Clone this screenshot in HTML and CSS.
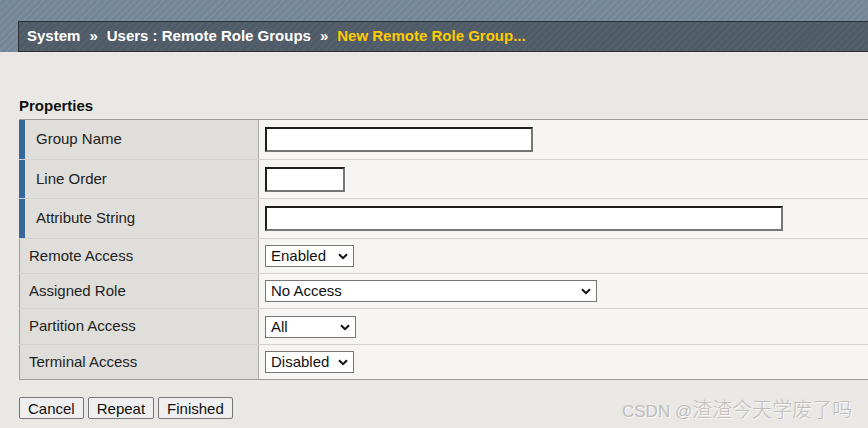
FILE: index.html
```html
<!DOCTYPE html>
<html lang="en">
<head>
<meta charset="utf-8">
<title>New Remote Role Group</title>
<link rel="stylesheet" href="styles.css">
</head>
<body>
<header class="topband">
  <div class="crumbs">
    <span class="crumb">System</span><span class="sep">»</span><span class="crumb">Users : Remote Role Groups</span><span class="sep">»</span><span class="crumb current">New Remote Role Group...</span>
  </div>
</header>
<main class="content">
  <div class="section-title">Properties</div>
  <div class="props">
    <div class="row req tall">
      <div class="label">Group Name</div>
      <div class="value"><input class="text w-name" type="text"></div>
    </div>
    <div class="row req tall2">
      <div class="label">Line Order</div>
      <div class="value"><input class="text w-order" type="text"></div>
    </div>
    <div class="row req tall">
      <div class="label">Attribute String</div>
      <div class="value"><input class="text w-attr" type="text"></div>
    </div>
    <div class="row">
      <div class="label">Remote Access</div>
      <div class="value"><span class="selwrap"><select class="sel w-89"><option>Enabled</option><option>Disabled</option></select><svg class="chev" width="10" height="7" viewBox="0 0 10 7"><path d="M1 1.2 L5 5.2 L9 1.2" fill="none" stroke="#111" stroke-width="2"/></svg></span></div>
    </div>
    <div class="row">
      <div class="label">Assigned Role</div>
      <div class="value"><span class="selwrap"><select class="sel w-role"><option>No Access</option></select><svg class="chev" width="10" height="7" viewBox="0 0 10 7"><path d="M1 1.2 L5 5.2 L9 1.2" fill="none" stroke="#111" stroke-width="2"/></svg></span></div>
    </div>
    <div class="row r36">
      <div class="label">Partition Access</div>
      <div class="value"><span class="selwrap"><select class="sel w-91"><option>All</option></select><svg class="chev" width="10" height="7" viewBox="0 0 10 7"><path d="M1 1.2 L5 5.2 L9 1.2" fill="none" stroke="#111" stroke-width="2"/></svg></span></div>
    </div>
    <div class="row last">
      <div class="label">Terminal Access</div>
      <div class="value"><span class="selwrap"><select class="sel w-89"><option>Disabled</option><option>Enabled</option></select><svg class="chev" width="10" height="7" viewBox="0 0 10 7"><path d="M1 1.2 L5 5.2 L9 1.2" fill="none" stroke="#111" stroke-width="2"/></svg></span></div>
    </div>
  </div>
  <div class="buttons">
    <button class="btn" type="button">Cancel</button>
    <button class="btn" type="button">Repeat</button>
    <button class="btn" type="button">Finished</button>
  </div>
</main>
<div class="watermark">CSDN @<span class="cjk">渣渣今天学废了吗</span></div>
</body>
</html>
```

FILE: styles.css
```css
html, body {
  margin: 0;
  padding: 0;
}
body {
  background: #e9e8e4;
  font-family: "Liberation Sans", Arial, sans-serif;
  font-size: 15px;
  color: #222;
  position: relative;
  min-height: 428px;
  overflow: hidden;
}
.topband {
  height: 52px;
  box-sizing: border-box;
  padding: 21px 0 0 18px;
  background-color: #74879a;
  background-image: repeating-linear-gradient(135deg, rgba(255,255,255,0.05) 0 2px, rgba(0,0,0,0.0) 2px 5px);
}
.crumbs {
  height: 31px;
  box-sizing: border-box;
  border: 1px solid #2c3035;
  border-right: none;
  background-color: #4f5b67;
  background-image: repeating-linear-gradient(135deg, rgba(255,255,255,0.03) 0 2px, rgba(0,0,0,0) 2px 5px);
  padding-left: 8px;
  line-height: 28px;
  font-weight: bold;
  font-size: 15px;
  color: #fff;
  white-space: nowrap;
}
.sep {
  margin: 0 9px 0 9px;
}
.current {
  color: #ffcc00;
}
.content {
  padding-left: 19px;
}
.section-title {
  margin-top: 45px;
  line-height: 18px;
  font-weight: bold;
  font-size: 15px;
  color: #111;
  margin-bottom: 4px;
}
.props {
  border-top: 1px solid #9d9d9d;
}
.row {
  display: flex;
  height: 35px;
  box-sizing: border-box;
  border-bottom: 1px solid #d2d2d0;
}
.row.tall { height: 40px; }
.row.tall2 { height: 39px; }
.row.r36 { height: 36px; }
.row.last { border-bottom: 1px solid #9d9d9d; }
.label {
  width: 240px;
  flex: none;
  box-sizing: border-box;
  background: #dfdedb;
  border-left: 1px solid #9d9d9d;
  border-right: 1px solid #a9a9a9;
  padding-left: 9px;
  padding-bottom: 2px;
  display: flex;
  align-items: center;
  color: #222;
}
.row.req .label {
  border-left: 6px solid #35679a;
  padding-left: 11px;
}
.value {
  flex: 1;
  background: #f6f5f3;
  padding-left: 6px;
  display: flex;
  align-items: center;
}
.text {
  box-sizing: border-box;
  height: 25px;
  border-width: 2px;
  border-style: solid;
  border-color: #1e1e1e #767676 #767676 #1e1e1e;
  background: #fff;
  font: 15px "Liberation Sans", Arial, sans-serif;
  padding: 1px 3px;
  margin: 0;
  outline: none;
}
.w-name { width: 268px; }
.w-order { width: 80px; }
.w-attr { width: 518px; }
.selwrap {
  position: relative;
  display: inline-flex;
}
.sel {
  -webkit-appearance: none;
  appearance: none;
  box-sizing: border-box;
  height: 22px;
  border: 1px solid #767676;
  border-radius: 0;
  background: #fff;
  font: 15px "Liberation Sans", Arial, sans-serif;
  color: #111;
  margin: 0;
  padding: 0 20px 0 5px;
  line-height: 20px;
}
.chev {
  position: absolute;
  right: 6px;
  top: 8px;
  pointer-events: none;
}
.w-89 { width: 89px; }
.w-91 { width: 91px; }
.w-role { width: 332px; }
.buttons {
  margin-top: 17px;
  display: flex;
  gap: 4px;
}
.btn {
  height: 22px;
  box-sizing: border-box;
  padding: 0 8px;
  border: 1px solid #767676;
  border-radius: 2px;
  background: #efefef;
  font: 15px "Liberation Sans", Arial, sans-serif;
  color: #111;
  margin: 0;
}
.watermark {
  position: absolute;
  left: 622px;
  top: 397px;
  font-family: "Liberation Sans", Arial, "Noto Sans CJK SC", sans-serif;
  font-size: 17px;
  line-height: 24px;
  color: #bdbdbd;
  text-shadow: 1px 1px 0 #fafafa;
  white-space: nowrap;
}
.watermark .cjk {
  font-family: "Noto Sans CJK SC", sans-serif;
  font-size: 20px;
  font-weight: 300;
}
```
